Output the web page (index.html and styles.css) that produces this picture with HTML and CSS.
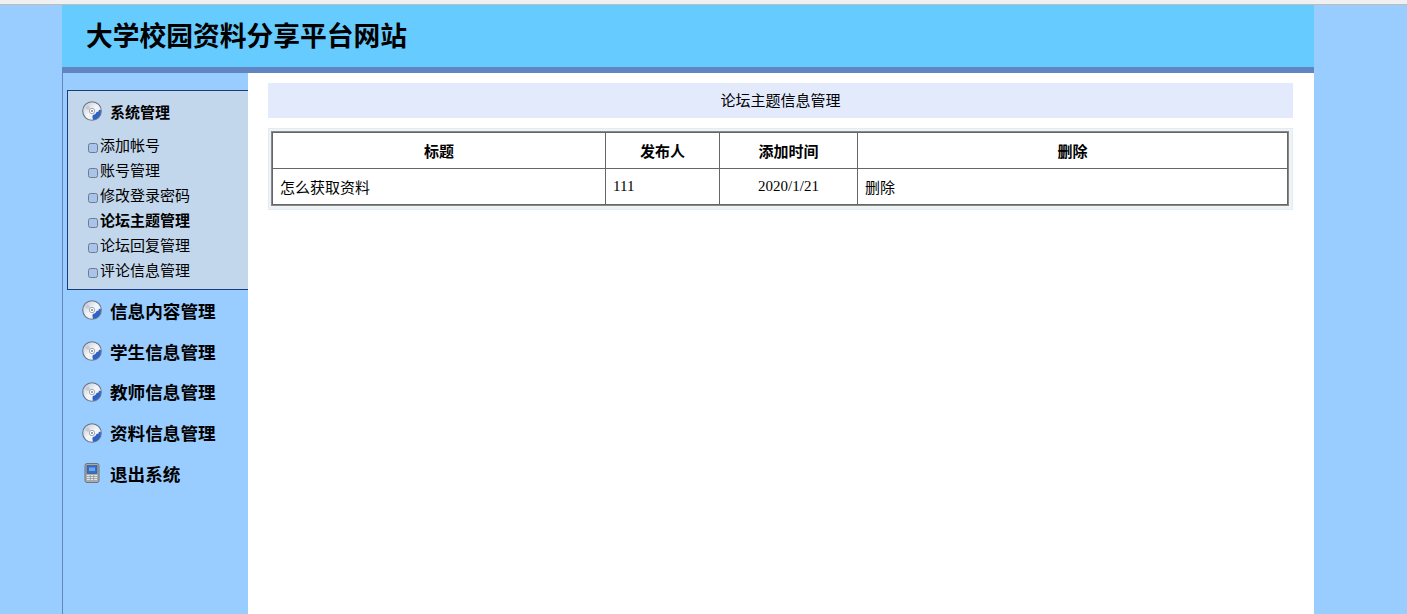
FILE: index.html
```html
<!DOCTYPE html>
<html lang="zh">
<head>
<meta charset="utf-8">
<title>大学校园资料分享平台网站</title>
<link rel="stylesheet" href="styles.css">
</head>
<body>
<svg class="defs" width="0" height="0" aria-hidden="true">
  <defs>
    <linearGradient id="cdbg" x1="0" y1="0" x2="1" y2="1">
      <stop offset="0" stop-color="#b9c3d2"/><stop offset=".5" stop-color="#f4f6f9"/><stop offset="1" stop-color="#dfe5ee"/>
    </linearGradient>
    <symbol id="cd" viewBox="0 0 20 20">
      <circle cx="10" cy="10" r="9.3" fill="url(#cdbg)" stroke="#6d7480" stroke-width="1.1"/>
      <path d="M11 18.9c3-.4 5.700-2 7-4.700.8-1.600 1.100-3.600.8-5.200-.7-.6-1.500-.4-2 .3l-.6 1.600c-.8-.4-1.700-.1-2.100.8-.3 1-1.300 1.900-2.400 2.100-1.200.3-1.300 1.400-1.200 2.600z" fill="#2f62c4"/>
      <path d="M3 7l3-3 2 3-2 2z" fill="#c2cad6"/>
      <circle cx="10" cy="10" r="2.700" fill="#fff" stroke="#8b93a0" stroke-width=".8"/>
      <circle cx="10" cy="10" r="1" fill="#77808e"/>
    </symbol>
    <symbol id="phone" viewBox="0 0 16 20">
      <rect x="1" y=".5" width="14" height="19" rx="2" fill="#a9acaf" stroke="#6f7478"/>
      <rect x="3" y="2.500" width="10" height="8" fill="#2f6fd0" stroke="#4a5a78" stroke-width=".7"/>
      <rect x="5" y="4.500" width="6" height="3.500" fill="#6fa6e6"/>
      <path d="M3 12.500h10M3 14.500h10M3 16.500h10" stroke="#e6e8e8" stroke-width="1.100"/>
      <path d="M6.300 12v5.500M9.700 12v5.500" stroke="#85898c" stroke-width=".7"/>
    </symbol>
  </defs>
</svg>
<div class="topline"></div>
<div class="page">
  <header class="banner"><h1>大学校园资料分享平台网站</h1></header>
  <div class="body-row">
    <aside class="sidebar">
      <section class="panel">
        <div class="panel-head"><svg class="icon"><use href="#cd"/></svg><span>系统管理</span></div>
        <ul class="submenu">
          <li>添加帐号</li>
          <li>账号管理</li>
          <li>修改登录密码</li>
          <li class="current">论坛主题管理</li>
          <li>论坛回复管理</li>
          <li>评论信息管理</li>
        </ul>
      </section>
      <nav class="groups">
        <a class="group"><svg class="icon"><use href="#cd"/></svg><span>信息内容管理</span></a>
        <a class="group"><svg class="icon"><use href="#cd"/></svg><span>学生信息管理</span></a>
        <a class="group"><svg class="icon"><use href="#cd"/></svg><span>教师信息管理</span></a>
        <a class="group"><svg class="icon"><use href="#cd"/></svg><span>资料信息管理</span></a>
        <a class="group"><svg class="icon"><use href="#phone"/></svg><span>退出系统</span></a>
      </nav>
    </aside>
    <main class="content">
      <div class="title-bar">论坛主题信息管理</div>
      <div class="table-wrap">
        <table class="grid">
          <colgroup>
            <col class="c1"><col class="c2"><col class="c3"><col>
          </colgroup>
          <thead>
            <tr><th>标题</th><th>发布人</th><th>添加时间</th><th>删除</th></tr>
          </thead>
          <tbody>
            <tr><td>怎么获取资料</td><td>111</td><td class="center">2020/1/21</td><td>删除</td></tr>
          </tbody>
        </table>
      </div>
    </main>
  </div>
</div>
</body>
</html>
```
FILE: styles.css
```css
* { box-sizing: border-box; }
html, body { margin: 0; padding: 0; height: 100%; }
body {
  background: #99ccff;
  color: #000;
  font-family: "Liberation Serif", "Noto Sans CJK SC", serif;
  font-size: 15px;
  overflow: hidden;
}
.defs { position: absolute; }
.topline { height: 5px; background: #f0f0f0; border-bottom: 1px solid #bdbdbd; }
.page { width: 1252px; margin-left: 62px; height: 609px; display: flex; flex-direction: column; }
.banner { height: 62px; background: #66ccff; padding-left: 24px; display: flex; align-items: center; flex: none; }
.banner h1 {
  margin: 0;
  font: bold 26.75px/1 "Liberation Sans", "Noto Sans CJK SC", sans-serif;
  position: relative;
  top: 1px;
}
.body-row { flex: 1; display: flex; border-top: 6px solid #6085c0; min-height: 0; }
.sidebar {
  width: 186px;
  flex: none;
  border-left: 1px solid #6085c0;
  padding: 17px 0 0 4px;
  font-family: "Liberation Sans", "Noto Sans CJK SC", sans-serif;
}
.panel { background: #c3d7ec; border: 1px solid #1b3c78; border-right: 0; height: 200px; }
.panel-head { display: flex; align-items: center; height: 40px; padding-left: 14px; font-weight: bold; font-size: 15px; }
.icon { width: 20px; height: 20px; flex: none; margin-right: 8px; }
.submenu { list-style: none; margin: 2px 0 0; padding: 0 0 0 32px; }
.submenu li { height: 25px; line-height: 25px; position: relative; }
.submenu li::before {
  content: "";
  position: absolute;
  left: -12px;
  top: 10px;
  width: 8px;
  height: 8px;
  border-radius: 2.5px;
  background: #a9c4ea;
  border: 1.500px solid #6e7a8c;
}
.submenu .current { font-weight: bold; }
.groups { display: flex; flex-direction: column; padding-left: 15px; }
.group { display: flex; align-items: center; height: 40.75px; font-size: 17.6px; font-weight: bold; }
.content { flex: 1; background: #fff; padding: 10px 21px 0 20px; min-width: 0; }
.title-bar {
  height: 35px;
  line-height: 35px;
  background: #e2eafc;
  text-align: center;
  font-family: "Liberation Sans", "Noto Sans CJK SC", sans-serif;
}
.table-wrap { margin-top: 10px; padding: 4px; background: #eef3f3; border: 1px solid #e2eafc; border-width: 0 1px 1px 0; box-shadow: inset 0 1px 0 #e2eafc, inset 1px 0 0 #e2eafc; }
.grid { width: 100%; table-layout: fixed; border-collapse: collapse; background: #fff; }
.grid th, .grid td { border: 1px solid #666; padding: 0 7px; height: 36px; }
.grid { outline: 1px solid #888; }
.grid th { font-weight: bold; text-align: center; }
.grid td { text-align: left; }
.grid td.center { text-align: center; }
.c1 { width: 333px; }
.c2 { width: 114px; }
.c3 { width: 138px; }
```
